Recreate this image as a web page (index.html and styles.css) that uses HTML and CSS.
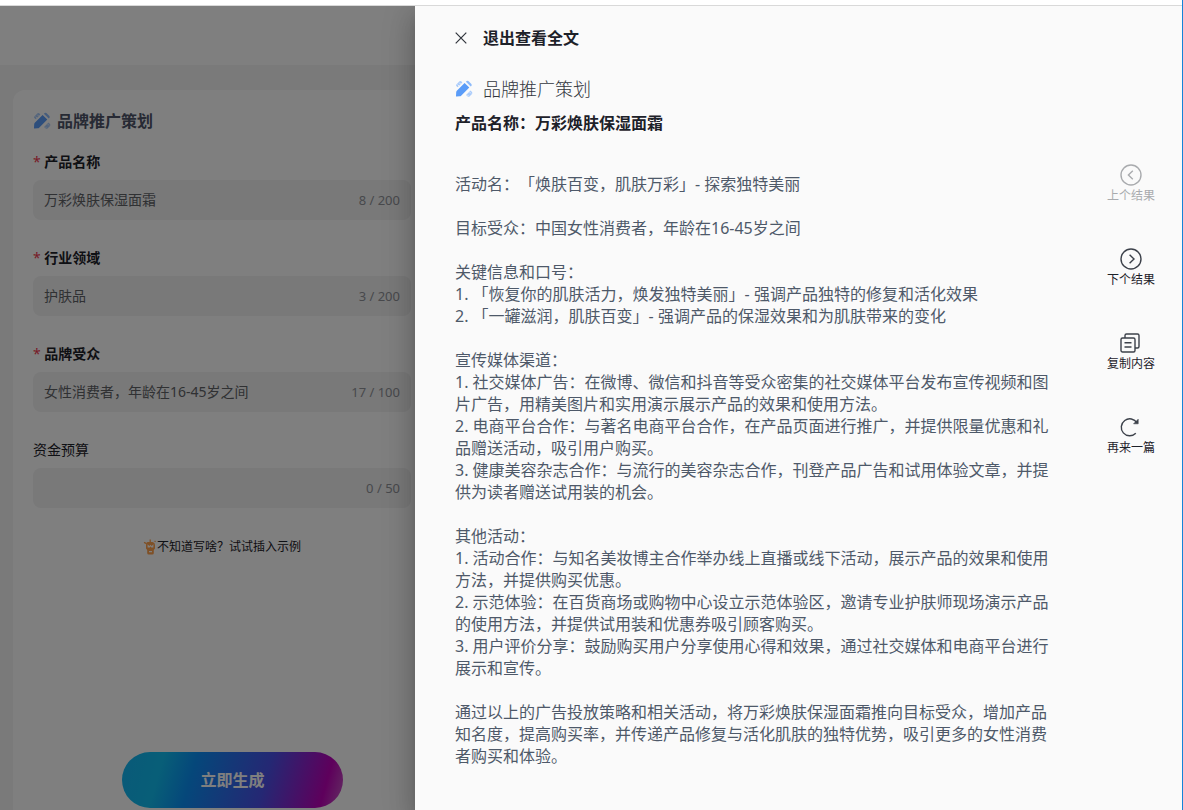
FILE: index.html
```html
<!DOCTYPE html>
<html lang="zh-CN">
<head>
<meta charset="utf-8">
<title>品牌推广策划</title>
<link rel="stylesheet" href="styles.css">
</head>
<body>
<svg class="defs" aria-hidden="true">
  <defs>
    <symbol id="design" viewBox="0 0 18 18">
      <path d="M1.200 4.800 4.200 1.400Q5.200.5 6.200 1.300L7.400 2.500 2.600 7.200 1.300 6Q.7 5.400 1.200 4.800Z" fill="#a9cbfb"/>
      <path d="M2.600 4.600 4 6M4.400 2.800l1.200 1.200" stroke="#fafafa" stroke-width=".8"/>
      <path d="M11 15 15.500 10.600 17 12.100Q17.800 13 17 13.900L14.500 16.400Q13.600 17.200 12.700 16.500Z" fill="#a9cbfb"/>
      <path d="M13.300 15.800 12.300 14.800M16 13.400l-1.200-1.200" stroke="#fafafa" stroke-width=".8"/>
      <path d="M1.200 12.200Q1.200 11.300 1.800 10.700L9.600 2.900 14.300 7.500 6.400 15.400Q5.600 16.200 4.600 16.300L1.600 16.600Q.9 16.600 1 15.900Z" fill="#5a9cf8"/>
      <path d="M10.900 1.700 11.600 1Q12.500.3 13.400 1.100L16.400 4.100Q17.100 5 16.400 5.900L15.700 6.500Z" fill="#8dbafa"/>
    </symbol>
  </defs>
</svg>
<div class="window">
  <div class="strip"></div>
  <div class="app">
    <header class="topbar"></header>
    <main class="page">
      <form class="card">
        <h1 class="card-title"><svg class="design"><use href="#design"/></svg>品牌推广策划</h1>
        <div class="fields">
          <div class="field">
            <label class="label required" for="name">产品名称</label>
            <div class="box"><input id="name" type="text" value="万彩焕肤保湿面霜"><span class="count">8 / 200</span></div>
          </div>
          <div class="field">
            <label class="label required" for="industry">行业领域</label>
            <div class="box"><input id="industry" type="text" value="护肤品"><span class="count">3 / 200</span></div>
          </div>
          <div class="field">
            <label class="label required" for="audience">品牌受众</label>
            <div class="box"><input id="audience" type="text" value="女性消费者，年龄在16-45岁之间"><span class="count">17 / 100</span></div>
          </div>
          <div class="field">
            <label class="label" for="budget">资金预算</label>
            <div class="box"><input id="budget" type="text"><span class="count">0 / 50</span></div>
          </div>
          <button class="tip" type="button">
            <svg class="bulb" viewBox="0 0 14 16"><path d="M4.500 3h5Q12 3.400 12 6v3.500L10.800 11v3Q10.800 15.500 9.300 15.500H5.700Q4.200 15.500 4.200 14v-3L3 9.500V6Q3 3.400 4.500 3Z" fill="#ffa04c"/><path d="M7.200.6V3M1 3.400 3.600 4.600M11.600 2.800l.9-.8" stroke="#ffa04c" stroke-width="1.300"/><path d="M5.200 8.600V6.800l1.100 1.100 1.200-1.200 1.200 1.200 1.100-1.100v1.800M6 12.600h3" fill="none" stroke="#fff" stroke-width="1.200"/></svg>不知道写啥？试试插入示例
          </button>
        </div>
        <button class="submit" type="button">立即生成</button>
      </form>
    </main>
    <div class="mask"></div>
    <aside class="drawer" role="dialog" aria-label="查看全文">
      <button class="exit" type="button">
        <svg class="close" viewBox="0 0 12 12"><path d="M.7.7l10.600 10.600M11.300.7.7 11.300" stroke="#30343c" stroke-width="1.200" fill="none"/></svg>退出查看全文
      </button>
      <h2 class="doc-title"><svg class="design"><use href="#design"/></svg>品牌推广策划</h2>
      <h3 class="doc-subject">产品名称：万彩焕肤保湿面霜</h3>
      <div class="doc">
        <article class="article">
          <p>活动名：「焕肤百变，肌肤万彩」- 探索独特美丽</p>
          <p>目标受众：中国女性消费者，年龄在16-45岁之间</p>
          <p>关键信息和口号：<br>1. 「恢复你的肌肤活力，焕发独特美丽」- 强调产品独特的修复和活化效果<br>2. 「一罐滋润，肌肤百变」- 强调产品的保湿效果和为肌肤带来的变化</p>
          <p>宣传媒体渠道：<br>1. 社交媒体广告：在微博、微信和抖音等受众密集的社交媒体平台发布宣传视频和图片广告，用精美图片和实用演示展示产品的效果和使用方法。<br>2. 电商平台合作：与著名电商平台合作，在产品页面进行推广，并提供限量优惠和礼品赠送活动，吸引用户购买。<br>3. 健康美容杂志合作：与流行的美容杂志合作，刊登产品广告和试用体验文章，并提供为读者赠送试用装的机会。</p>
          <p>其他活动：<br>1. 活动合作：与知名美妆博主合作举办线上直播或线下活动，展示产品的效果和使用方法，并提供购买优惠。<br>2. 示范体验：在百货商场或购物中心设立示范体验区，邀请专业护肤师现场演示产品的使用方法，并提供试用装和优惠券吸引顾客购买。<br>3. 用户评价分享：鼓励购买用户分享使用心得和效果，通过社交媒体和电商平台进行展示和宣传。</p>
          <p>通过以上的广告投放策略和相关活动，将万彩焕肤保湿面霜推向目标受众，增加产品知名度，提高购买率，并传递产品修复与活化肌肤的独特优势，吸引更多的女性消费者购买和体验。</p>
        </article>
        <nav class="actions">
          <button class="action" type="button" disabled><svg viewBox="0 0 22 22"><circle cx="11" cy="11" r="10"/><path d="M12.800 6.800 8.400 11l4.400 4.200"/></svg>上个结果</button>
          <button class="action" type="button"><svg viewBox="0 0 22 22"><circle cx="11" cy="11" r="10"/><path d="M9.600 6.800 14 11l-4.400 4.200"/></svg>下个结果</button>
          <button class="action" type="button"><svg viewBox="0 0 22 22"><rect x="1" y="6" width="14" height="14" rx="1.500"/><path d="M5 6V3.500Q5 2 6.500 2H17.500Q19 2 19 3.500V14.500Q19 16 17.500 16H15M4.500 10.800h7M4.500 15h7"/></svg>复制内容</button>
          <button class="action" type="button"><svg viewBox="0 0 22 22"><path d="M15.800 17.300A8.500 8.500 0 1 1 17 6.800"/><path d="M18.200 3.200v4.600h-4.600Z" fill="currentColor" stroke-width=".6"/></svg>再来一篇</button>
        </nav>
      </div>
    </aside>
  </div>
</div>
</body>
</html>
```

FILE: styles.css
```css
* { box-sizing: border-box; }

body, h1, h2, h3, p { margin: 0; }

body {
  font-family: "Noto Sans", "Noto Sans CJK SC", sans-serif;
  font-size: 14px;
  line-height: 20px;
  color: #1d2129;
  text-spacing-trim: space-all;
}

button, input {
  padding: 0;
  border: 0;
  background: none;
  font: inherit;
  color: inherit;
}

.defs { display: none; }

.window {
  display: flex;
  flex-direction: column;
  height: 100vh;
  border-right: 1px solid #1583d8;
  overflow: hidden;
}

.strip {
  flex: none;
  height: 6px;
  border-bottom: 1px solid #d9d9d9;
  background: #fff;
}

.app {
  position: relative;
  flex: 1;
  display: flex;
  flex-direction: column;
  min-height: 0;
  overflow: hidden;
}

.topbar {
  flex: none;
  height: 59px;
  background: #fff;
}

.page {
  flex: 1;
  display: flex;
  min-height: 0;
  padding: 25px 13px 0;
  background: #f4f4f5;
}

.card {
  display: flex;
  flex-direction: column;
  width: 439px;
  padding: 20px 20px 2px;
  border-radius: 12px 12px 0 0;
  background: #fff;
}

.design { width: 18px; height: 18px; }

.card-title {
  display: flex;
  align-items: center;
  gap: 6px;
  font-size: 16px;
  font-weight: 700;
  line-height: 22px;
  color: #4e5468;
}

.fields {
  flex: 1;
  display: flex;
  flex-direction: column;
  gap: 28px;
  padding: 20px 21px 0 0;
}

.field {
  display: flex;
  flex-direction: column;
  gap: 8px;
}

.required { font-weight: 700; }

.required::before {
  content: "* ";
  font-weight: 400;
  color: #f0384f;
}

.box {
  display: flex;
  align-items: center;
  height: 40px;
  padding: 0 11px;
  border-radius: 8px;
  background: #f2f2f3;
}

.box input {
  flex: 1;
  min-width: 0;
  outline: 0;
  color: #606266;
}

.count {
  font-size: 13px;
  color: #909399;
}

.tip {
  display: flex;
  align-items: center;
  align-self: center;
  font-size: 12px;
  line-height: 22px;
}

.bulb { width: 14px; height: 16px; }

.submit {
  align-self: center;
  width: 221px;
  height: 56px;
  border-radius: 28px;
  background: linear-gradient(106deg, #13b4f2 0%, #10bdf0 18%, #0a8ff5 32%, #4a50e8 64%, #bd00b8 90%, #c65fc6 100%);
  font-size: 16px;
  font-weight: 700;
  color: #fff;
}

.mask {
  position: absolute;
  inset: 0;
  background: rgba(0, 0, 0, .5);
}

.drawer {
  position: absolute;
  inset: 0 0 0 415px;
  display: flex;
  flex-direction: column;
  align-items: flex-start;
  padding: 20px 27px 0 40px;
  background: #fafafa;
  box-shadow: 0 8px 10px -5px rgba(0, 0, 0, .2), 0 16px 24px 2px rgba(0, 0, 0, .14), 0 6px 30px 5px rgba(0, 0, 0, .12);
}

.exit {
  display: flex;
  align-items: center;
  gap: 16px;
  font-size: 16px;
  font-weight: 700;
  line-height: 24px;
}

.close { width: 12px; height: 12px; }

.doc-title {
  display: flex;
  align-items: center;
  gap: 10px;
  margin-top: 26px;
  font-size: 18px;
  font-weight: 300;
  line-height: 26px;
  color: #33373e;
}

.doc-subject {
  margin-top: 9px;
  font-size: 16px;
  font-weight: 700;
  line-height: 24px;
}

.doc {
  display: flex;
  align-self: stretch;
  gap: 52px;
  margin-top: 38px;
}

.article {
  flex: 1;
  display: flex;
  flex-direction: column;
  gap: 22px;
  font-size: 16px;
  line-height: 22px;
  color: #4e5969;
}

.actions {
  display: flex;
  flex-direction: column;
  gap: 42px;
  margin-top: -9px;
}

.action {
  display: flex;
  flex-direction: column;
  align-items: center;
  font-size: 12px;
  line-height: 20px;
}

.action svg {
  width: 22px;
  height: 22px;
  fill: none;
  stroke: #3c414a;
  stroke-width: 1.4;
  color: #3c414a;
}

.action:disabled { color: #a9abae; }

.action:disabled svg { stroke: #a9abae; }
```
